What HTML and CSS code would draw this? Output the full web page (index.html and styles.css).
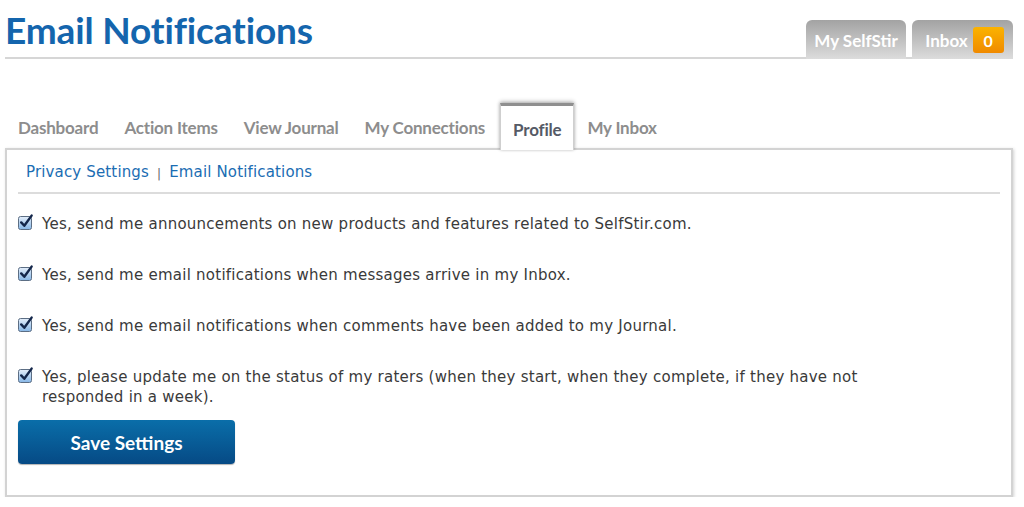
FILE: index.html
```html
<!DOCTYPE html>
<html lang="en">
<head>
<meta charset="utf-8">
<title>Email Notifications</title>
<link rel="stylesheet" href="styles.css">
</head>
<body>
<div class="page">
  <header class="header">
    <h1 class="title">Email Notifications</h1>
    <nav class="top-tabs">
      <a class="top-tab">My SelfStir</a>
      <a class="top-tab">Inbox <span class="badge">0</span></a>
    </nav>
  </header>

  <nav class="tabs">
    <a class="tab">Dashboard</a>
    <a class="tab">Action Items</a>
    <a class="tab">View Journal</a>
    <a class="tab">My Connections</a>
    <a class="tab active">Profile</a>
    <a class="tab">My Inbox</a>
  </nav>

  <section class="panel">
    <div class="subnav">
      <a class="sublink">Privacy Settings</a>
      <span class="pipe">|</span>
      <a class="sublink">Email Notifications</a>
    </div>

    <ul class="options">
      <li class="option">
        <svg class="cb" viewBox="0 0 16 16"><defs><linearGradient id="g1" x1="0" y1="0" x2="0" y2="1"><stop offset="0" stop-color="#e4eefa"/><stop offset="1" stop-color="#86b6e6"/></linearGradient></defs><rect x="0.5" y="2.5" width="13" height="13" rx="2" fill="url(#g1)" stroke="#5c6e84"/><path d="M3.2 8.4 L6.3 11.8 L13.6 1.6" fill="none" stroke="#13264a" stroke-width="2.4" stroke-linecap="round" stroke-linejoin="round"/></svg>
        <span>Yes, send me announcements on new products and features related to SelfStir.com.</span>
      </li>
      <li class="option">
        <svg class="cb" viewBox="0 0 16 16"><rect x="0.5" y="2.5" width="13" height="13" rx="2" fill="url(#g1)" stroke="#5c6e84"/><path d="M3.2 8.4 L6.3 11.8 L13.6 1.6" fill="none" stroke="#13264a" stroke-width="2.4" stroke-linecap="round" stroke-linejoin="round"/></svg>
        <span>Yes, send me email notifications when messages arrive in my Inbox.</span>
      </li>
      <li class="option">
        <svg class="cb" viewBox="0 0 16 16"><rect x="0.5" y="2.5" width="13" height="13" rx="2" fill="url(#g1)" stroke="#5c6e84"/><path d="M3.2 8.4 L6.3 11.8 L13.6 1.6" fill="none" stroke="#13264a" stroke-width="2.4" stroke-linecap="round" stroke-linejoin="round"/></svg>
        <span>Yes, send me email notifications when comments have been added to my Journal.</span>
      </li>
      <li class="option">
        <svg class="cb" viewBox="0 0 16 16"><rect x="0.5" y="2.5" width="13" height="13" rx="2" fill="url(#g1)" stroke="#5c6e84"/><path d="M3.2 8.4 L6.3 11.8 L13.6 1.6" fill="none" stroke="#13264a" stroke-width="2.4" stroke-linecap="round" stroke-linejoin="round"/></svg>
        <span class="wrap">Yes, please update me on the status of my raters (when they start, when they complete, if they have not responded in a week).</span>
      </li>
    </ul>

    <button class="save">Save Settings</button>
  </section>
</div>
</body>
</html>
```

FILE: styles.css
```css
* { box-sizing: border-box; }

body {
  margin: 0;
  background: #fff;
  font-family: "DejaVu Sans", Verdana, sans-serif;
}

.page {
  margin-left: 5px;
  width: 1008px;
}

.header {
  display: flex;
  align-items: flex-end;
  justify-content: space-between;
  height: 59px;
  border-bottom: 2px solid #d6d6d6;
}

.title {
  margin: 0 0 7px 0;
  font-family: Lato, "Open Sans", sans-serif;
  font-weight: 700;
  font-size: 37px;
  line-height: 40px;
  color: #1465ad;
  letter-spacing: -0.15px;
}

.top-tabs {
  display: flex;
  gap: 6px;
  margin-bottom: -2px;
}

.top-tab {
  display: flex;
  align-items: center;
  justify-content: center;
  gap: 5px;
  width: 100px;
  height: 39px;
  padding-top: 1px;
  border-radius: 6px 6px 0 0;
  background: linear-gradient(#a3a3a3, #dcdcdc);
  color: #fff;
  font-family: Lato, sans-serif;
  font-weight: 700;
  font-size: 17px;
}

.top-tab + .top-tab { width: 101px; padding-left: 4px; }

.badge {
  display: inline-flex;
  align-items: center;
  justify-content: center;
  width: 31px;
  height: 26px;
  border-radius: 3px;
  background: linear-gradient(#fbb300, #f08a00);
  color: #fff;
  font-size: 16px;
}

.tabs {
  display: flex;
  align-items: flex-end;
  height: 91px;
  position: relative;
  z-index: 2;
  margin-bottom: -2px;
}

.tab {
  padding: 0 13px 12px;
  font-family: Lato, sans-serif;
  font-weight: 700;
  font-size: 17px;
  color: #8d8d8d;
  letter-spacing: -0.2px;
}

.tab.active {
  height: 47px;
  display: flex;
  align-items: flex-end;
  padding: 0 12px 10px;
  background: #fff;
  color: #555a66;
  border: 1px solid #cfcfcf;
  border-top: 3px solid #8f8f8f;
  border-bottom: none;
  box-shadow: 0 -2px 4px rgba(0,0,0,0.2), 1px 0 3px rgba(0,0,0,0.12), -1px 0 3px rgba(0,0,0,0.12);
  margin-left: 2px;
}

.panel {
  height: 349px;
  border: 2px solid #d3d3d3;
  box-shadow: 1px 1px 3px rgba(0,0,0,0.18);
  padding: 8px 11px 0 11px;
}

.subnav {
  display: flex;
  align-items: center;
  gap: 8px;
  height: 36px;
  padding: 0 0 6px 8px;
  border-bottom: 2px solid #dcdcdc;
  font-size: 15px;
  letter-spacing: 0.15px;
  color: #1b6db3;
}

.pipe {
  color: #666;
  font-size: 12px;
  margin-top: 4px;
}

.options {
  list-style: none;
  margin: 0;
  padding: 20px 0 0 0;
}

.option {
  display: flex;
  align-items: flex-start;
  gap: 8px;
  margin-bottom: 31px;
  font-size: 15px;
  letter-spacing: 0.25px;
  line-height: 20px;
  color: #3a3a3a;
}

.option:last-child { margin-bottom: 0; }

.cb {
  flex: none;
  width: 16px;
  height: 16px;
  margin-top: 0;
}

.wrap { max-width: 830px; }

.save {
  margin-top: 13px;
  width: 217px;
  height: 44px;
  border: none;
  border-radius: 4px;
  background: linear-gradient(#0a6ea9, #064a85);
  color: #fff;
  font-family: Lato, sans-serif;
  font-weight: 700;
  font-size: 19px;
  box-shadow: 0 1px 1px rgba(0,0,0,0.3);
}
```
